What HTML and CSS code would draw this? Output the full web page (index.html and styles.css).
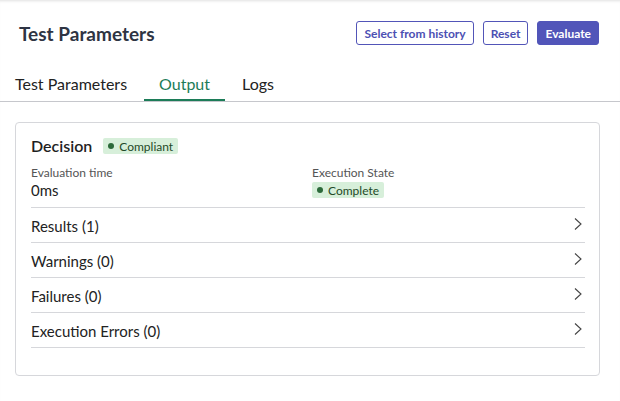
FILE: index.html
```html
<!DOCTYPE html>
<html lang="en">
<head>
    <meta charset="UTF-8">
    <meta name="viewport" content="width=device-width, initial-scale=1.0">
    <title>Test Parameters</title>
    <link rel="stylesheet" href="styles.css">
</head>
<body>
    <div class="page">
        <header class="header">
            <h1>Test Parameters</h1>
            <div class="actions">
                <button class="btn btn-outline">Select from history</button>
                <button class="btn btn-outline">Reset</button>
                <button class="btn btn-primary">Evaluate</button>
            </div>
        </header>

        <nav class="tabs">
            <a class="tab">Test Parameters</a>
            <a class="tab active">Output</a>
            <a class="tab">Logs</a>
        </nav>

        <section class="card">
            <div class="decision">
                <h2>Decision</h2>
                <span class="badge"><i class="dot"></i>Compliant</span>
            </div>
            <div class="meta">
                <div class="meta-item">
                    <div class="meta-label">Evaluation time</div>
                    <div class="meta-value">0ms</div>
                </div>
                <div class="meta-item">
                    <div class="meta-label">Execution State</div>
                    <span class="badge"><i class="dot"></i>Complete</span>
                </div>
            </div>

            <ul class="sections">
                <li class="section-row">
                    <span>Results (1)</span>
                    <svg class="chevron" viewBox="0 0 10 14" width="10" height="14"><path d="M2 1.5 L8 7 L2 12.5" /></svg>
                </li>
                <li class="section-row">
                    <span>Warnings (0)</span>
                    <svg class="chevron" viewBox="0 0 10 14" width="10" height="14"><path d="M2 1.5 L8 7 L2 12.5" /></svg>
                </li>
                <li class="section-row">
                    <span>Failures (0)</span>
                    <svg class="chevron" viewBox="0 0 10 14" width="10" height="14"><path d="M2 1.5 L8 7 L2 12.5" /></svg>
                </li>
                <li class="section-row">
                    <span>Execution Errors (0)</span>
                    <svg class="chevron" viewBox="0 0 10 14" width="10" height="14"><path d="M2 1.5 L8 7 L2 12.5" /></svg>
                </li>
            </ul>
        </section>
    </div>
</body>
</html>
```

FILE: styles.css
```css
/* Page */
body {
    font-family: Lato, 'Open Sans', sans-serif;
    margin: 0;
    padding: 0;
    background: #fff;
    color: #222;
}

.page {
    min-height: 401px;
    box-shadow: inset 0 3px 3px -2px rgba(0, 0, 0, 0.12);
}

/* Header */
.header {
    display: flex;
    justify-content: space-between;
    align-items: center;
    height: 66px;
    padding: 0 21px 0 19px;
}

.header h1 {
    margin: 0;
    font-size: 19px;
    font-weight: 700;
    color: #2e3443;
}

.actions {
    display: flex;
    gap: 9px;
}

.btn {
    font-family: inherit;
    font-size: 12px;
    font-weight: 700;
    height: 24px;
    padding: 0 7px;
    border-radius: 3px;
    cursor: pointer;
}

.btn-outline {
    background: #fff;
    color: #4c50b3;
    border: 1px solid #5255b8;
}

.btn-primary {
    background: #5155b9;
    color: #fff;
    border: 1px solid #5155b9;
}

/* Tabs */
.tabs {
    display: flex;
    gap: 2px;
    height: 34px;
    margin-top: 1px;
    border-bottom: 1px solid #c6c7cc;
}

.tab {
    display: flex;
    align-items: center;
    padding: 0 15px;
    font-size: 16px;
    color: #222;
    border-bottom: 2px solid transparent;
    cursor: pointer;
}

.tab.active {
    color: #1c7c58;
    border-bottom-color: #1c7c58;
}

/* Output card */
.card {
    margin: 20px 20px 0 15px;
    padding: 13px 14px 27px 15px;
    border: 1px solid #d6d7db;
    border-radius: 4px;
}

.decision {
    display: flex;
    align-items: center;
    gap: 11px;
}

.decision h2 {
    margin: 0;
    font-size: 16px;
    font-weight: 600;
    line-height: 20px;
    color: #1f1f1f;
}

.badge {
    display: inline-flex;
    align-items: center;
    gap: 5px;
    height: 16px;
    padding: 0 5px;
    background: #d7efda;
    color: #1f4a28;
    font-size: 12px;
    border-radius: 2px;
}

.dot {
    width: 6px;
    height: 6px;
    border-radius: 50%;
    background: #2c6a3a;
}

.meta {
    display: grid;
    grid-template-columns: 1fr 1fr;
    column-gap: 8px;
    margin-top: 9px;
    padding-bottom: 7px;
    border-bottom: 1px solid #d6d7db;
}

.meta-item {
    display: flex;
    flex-direction: column;
    align-items: flex-start;
}

.meta-item .badge {
    margin-top: 1px;
}

.meta-label {
    font-size: 12px;
    line-height: 16px;
    color: #555;
}

.meta-value {
    font-size: 15px;
    line-height: 19px;
    color: #222;
}

/* Collapsible sections */
.sections {
    list-style: none;
    margin: 0;
    padding: 0;
}

.section-row {
    display: flex;
    justify-content: space-between;
    align-items: center;
    height: 35px;
    padding-top: 1px;
    box-sizing: border-box;
    border-bottom: 1px solid #d6d7db;
    font-size: 15px;
    color: #222;
    cursor: pointer;
}

.chevron {
    margin-right: 2px;
    margin-top: -4px;
    fill: none;
    stroke: #444;
    stroke-width: 1.1;
}
```
